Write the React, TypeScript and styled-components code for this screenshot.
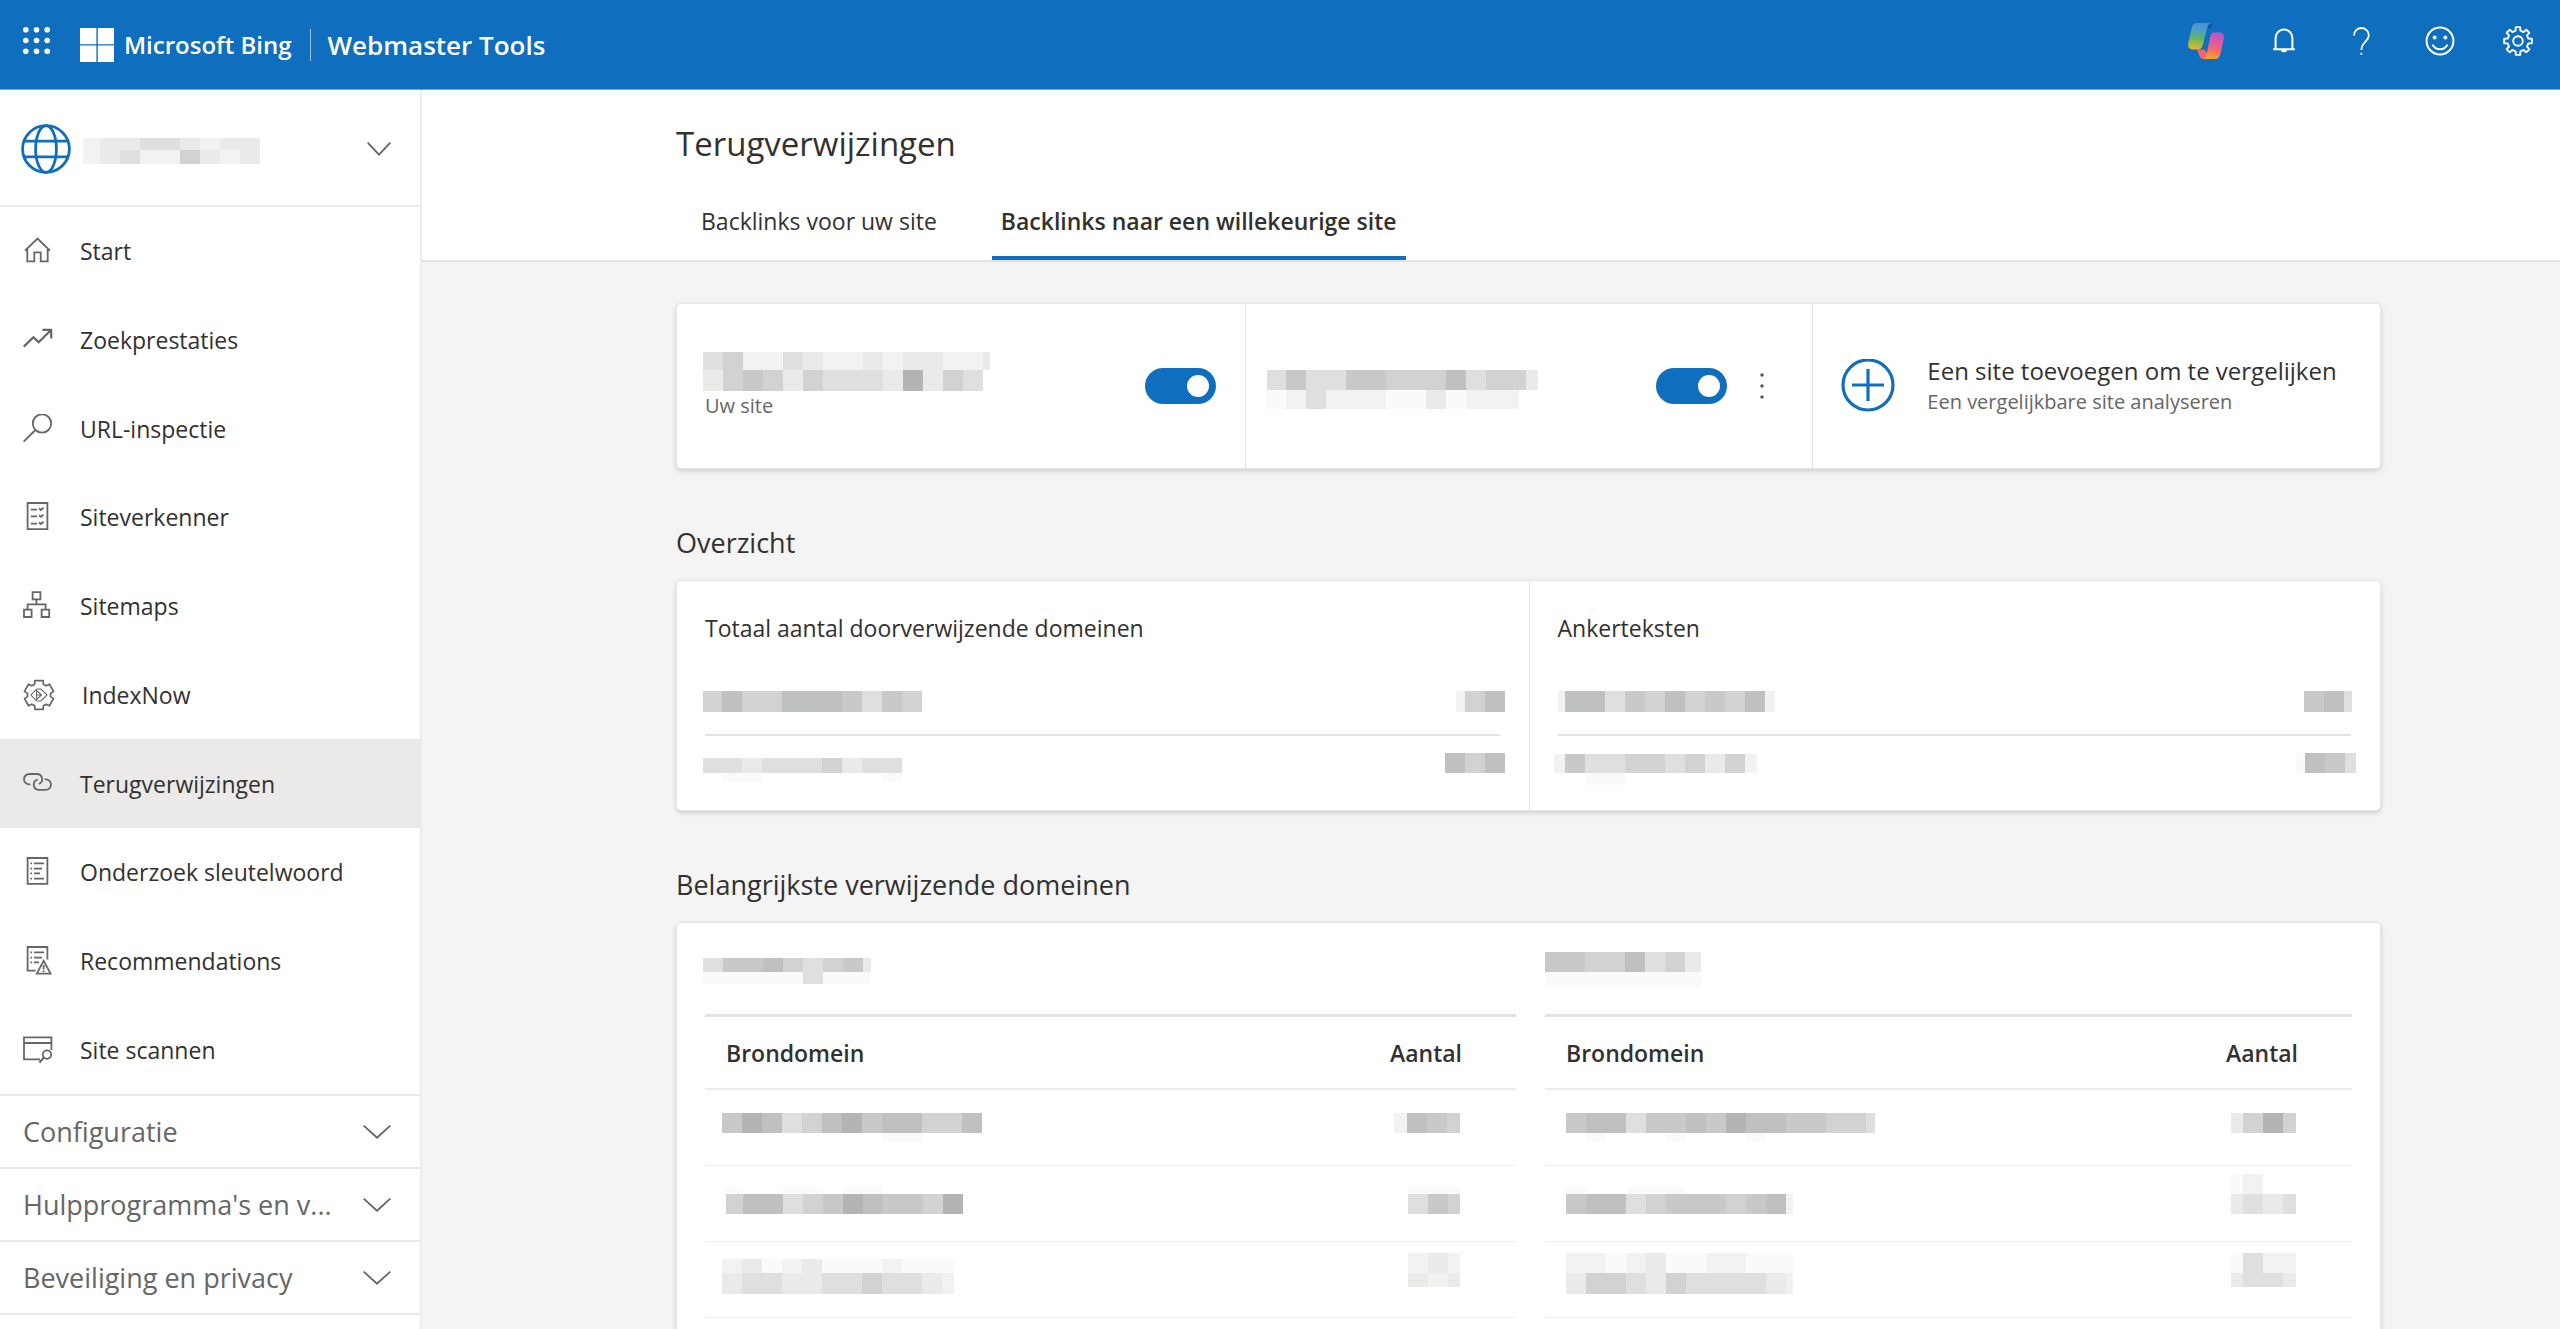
import React from "react";
import styled, { createGlobalStyle, css } from "styled-components";

const blue = "#106ebe";
const ink = "#323130";
const muted = "#666666";
const line = "#e3e3e3";

const GlobalStyle = createGlobalStyle`
  *, *::before, *::after { box-sizing: border-box; }
  body {
    margin: 0;
    overflow: hidden;
    background: #f4f4f4;
    color: ${ink};
    font-family: "Open Sans", "Noto Sans", sans-serif;
    font-size: 23px;
    line-height: 32px;
  }
  button { font: inherit; color: inherit; background: none; border: 0; padding: 0; cursor: pointer; }
  a { color: inherit; text-decoration: none; }
  h1, h2, h3, p, ul { margin: 0; padding: 0; font-weight: 400; }
  ul { list-style: none; }
  svg { display: block; flex: none; }
`;

/* ---------- layout ---------- */

const Page = styled.div`
  display: flex;
  flex-direction: column;
  height: 100vh;
  overflow: hidden;
`;

const TopBar = styled.header`
  display: flex;
  align-items: center;
  flex: none;
  height: 90px;
  padding: 0 3px 0 23px;
  background: ${blue};
  border-bottom: 1px solid #6ba5d8;
  color: #fff;
`;

const Waffle = styled.button`
  padding-bottom: 8px;
`;

const Brand = styled.a`
  display: flex;
  align-items: center;
  margin-left: 30px;
  gap: 10px;
  font-size: 24px;
  font-weight: 600;
`;

const Product = styled.a`
  margin-left: 18px;
  padding-left: 17px;
  font-size: 26px;
  font-weight: 600;
  border-left: 1px solid #9cc3e5;
`;

const Tools = styled.div`
  display: flex;
  margin-left: auto;
  padding-bottom: 8px;
`;

const ToolButton = styled.button`
  display: grid;
  place-items: center;
  width: 78px;
  height: 40px;
`;

const Body = styled.div`
  display: flex;
  flex: 1;
  min-height: 0;
`;

const Sidebar = styled.nav`
  flex: none;
  width: 422px;
  background: #fff;
  border-right: 2px solid #ececec;
`;

const SitePicker = styled.button`
  display: flex;
  align-items: center;
  width: 100%;
  height: 117px;
  padding: 2px 29px 0 21px;
  border-bottom: 2px solid #ececec;
`;

const SiteName = styled.span`
  margin: 4px auto 0 12px;
`;

const NavList = styled.ul`
  display: grid;
  grid-auto-rows: 1fr;
  height: 887px;
`;

const NavLink = styled.a<{ $active?: boolean }>`
  display: flex;
  align-items: center;
  gap: 27px;
  height: 100%;
  padding-left: 23px;
  color: ${ink};
  background: ${(p) => (p.$active ? "#ebeae9" : "transparent")};
  svg { color: ${muted}; }
`;

const Section = styled.button`
  display: flex;
  align-items: center;
  justify-content: space-between;
  width: 100%;
  height: 73px;
  padding: 0 29px 0 23px;
  border-top: 2px solid #e8e8e8;
  color: ${muted};
  font-size: 27px;
`;

const SidebarEnd = styled.div`
  border-top: 2px solid #e8e8e8;
`;

const Main = styled.main`
  flex: 1;
  min-width: 0;
`;

const PageHead = styled.div`
  padding: 32px 179px 0 254px;
  background: #fff;
  border-bottom: 2px solid #e1e1e1;
`;

const Title = styled.h1`
  margin-bottom: 20px;
  font-size: 33px;
  line-height: 44px;
`;

const Tabs = styled.div`
  display: flex;
  gap: 46px;
  padding-left: 16px;
`;

const Tab = styled.button<{ $active?: boolean }>`
  padding: 18px 9px;
  line-height: 34px;
  border-bottom: 4px solid transparent;
  ${(p) => p.$active && css`
    font-weight: 600;
    border-color: ${blue};
  `}
`;

const Content = styled.div`
  padding: 41px 179px 0 254px;
`;

const Card = styled.section<{ $columns?: number }>`
  display: grid;
  grid-template-columns: repeat(${(p) => p.$columns ?? 2}, 1fr);
  background: #fff;
  border: 1px solid #e6e6e6;
  border-radius: 5px;
  box-shadow: 0 2px 5px rgba(0, 0, 0, 0.16);
`;

const Heading = styled.h2`
  margin: 56px 0 19px;
  font-size: 27px;
  line-height: 36px;
`;

/* ---------- compare card ---------- */

const CompareCell = styled.div`
  display: flex;
  align-items: center;
  height: 164px;
  padding: 0 29px 0 28px;
  border-left: 1px solid ${line};
  &:first-child { border-left: 0; }
`;

const SiteBlock = styled.div`
  margin-right: auto;
`;

const Small = styled.p`
  color: ${muted};
  font-size: 20px;
  line-height: 30px;
`;

const Toggle = styled.input`
  appearance: none;
  display: flex;
  align-items: center;
  justify-content: flex-end;
  width: 71px;
  height: 36px;
  margin: 0;
  padding: 0 7px;
  border-radius: 18px;
  background: #8a8886;
  cursor: pointer;
  &::before {
    content: "";
    width: 22px;
    height: 22px;
    border-radius: 50%;
    background: #fff;
  }
  &:checked { background: ${blue}; }
`;

const MoreButton = styled.button`
  display: grid;
  place-items: center;
  width: 24px;
  height: 36px;
  margin: 0 9px 0 23px;
`;

const AddSite = styled.button`
  display: flex;
  align-items: center;
  gap: 32px;
  font-size: 24px;
  text-align: left;
`;

/* ---------- overview card ---------- */

const Panel = styled.div`
  padding: 31px 29px 20px 28px;
  border-left: 1px solid ${line};
  &:first-child { border-left: 0; }
`;

const PanelTitle = styled.h3`
  margin-bottom: 24px;
  font-size: 23px;
`;

const StatRow = styled.li`
  display: flex;
  align-items: center;
  justify-content: space-between;
  height: 68px;
  border-bottom: 2px solid ${line};
  &:last-child {
    height: 54px;
    border-bottom: 0;
  }
`;

/* ---------- domain tables ---------- */

const TableCard = styled(Card)`
  grid-template-columns: 201fr 200fr;
  column-gap: 29px;
  padding: 29px 28px 48px;
`;

const TableTitle = styled.div`
  height: 62px;
`;

const Table = styled.table`
  width: 100%;
  border-spacing: 0;
  border-top: 3px solid #e1e1e1;
`;

const Th = styled.th`
  height: 73px;
  padding: 0 54px 0 21px;
  border-bottom: 2px solid #ebebeb;
  font-weight: 600;
  text-align: left;
  &:last-child { text-align: right; }
`;

const Td = styled.td`
  height: 76px;
  padding: 0 56px 0 21px;
  border-bottom: 1px solid #eeeeee;
  vertical-align: middle;
`;

/* ---------- redacted values ---------- */

const shades = ["transparent", "#fafafa", "#f2f2f0", "#eaeae9", "#dfdfdf", "#d2d2d2", "#c8c9c8", "#bfc1c0", "#b3b4b3"];

type Strip = { h: number; cells?: string; first?: number; last?: number };
type Redacted = { strips: Strip[]; left?: number; right?: number; end?: boolean };

const Blocks = styled.span<{ $end?: boolean }>`
  display: flex;
  flex-direction: column;
  align-items: ${(p) => (p.$end ? "flex-end" : "flex-start")};
`;

const StripRow = styled.span`
  display: flex;
`;

const Block = styled.span<{ $shade: number }>`
  background: ${(p) => shades[p.$shade]};
`;

function Redaction({ strips, left = 0, right = 0, end }: Redacted) {
  return (
    <Blocks $end={end} style={{ marginLeft: -left, marginRight: -right }}>
      {strips.map((s, i) => {
        const cells = (s.cells ?? "").split("");
        return (
          <StripRow key={i} style={{ height: s.h }}>
            {cells.map((c, j) => {
              const width = j === 0 ? s.first ?? 20 : j === cells.length - 1 ? s.last ?? 20 : 20;
              return <Block key={j} $shade={Number(c)} style={{ width }} />;
            })}
          </StripRow>
        );
      })}
    </Blocks>
  );
}

const ownSite: Redacted = {
  left: 2,
  strips: [
    { h: 18, cells: "452243223233223", last: 7 },
    { h: 21, cells: "35653544438354", last: 20 },
  ],
};

const otherSite: Redacted = {
  left: 7,
  strips: [
    { h: 7 },
    { h: 20, cells: "46446655574553", first: 19, last: 12 },
    { h: 19, cells: "1242221131222", first: 19, last: 13 },
  ],
};

const overview: { title: string; rows: [Redacted, Redacted][] }[] = [
  {
    title: "Totaal aantal doorverwijzende domeinen",
    rows: [
      [
        { left: 2, strips: [{ h: 21, cells: "57557776465", first: 19 }] },
        { right: 5, strips: [{ h: 21, cells: "257", first: 9 }] },
      ],
      [
        { left: 2, strips: [{ h: 14 }, { h: 15, cells: "4434445344", first: 19 }, { h: 9, cells: "0110000001", first: 19 }] },
        { right: 5, strips: [{ h: 20, cells: "757" }] },
      ],
    ],
  },
  {
    title: "Ankerteksten",
    rows: [
      [
        { strips: [{ h: 21, cells: "277465756572", first: 7, last: 10 }] },
        { right: 1, strips: [{ h: 21, cells: "674", last: 8 }] },
      ],
      [
        { left: 4, strips: [{ h: 12 }, { h: 19, cells: "26445545352", first: 11, last: 12 }, { h: 12, cells: "0011", first: 11 }] },
        { right: 5, strips: [{ h: 20, cells: "1764", first: 9, last: 11 }] },
      ],
    ],
  },
];

const domainTables: { name: Redacted; rows: [Redacted, Redacted][] }[] = [
  {
    name: {
      left: 2,
      strips: [{ h: 6 }, { h: 14, cells: "466754563", last: 8 }, { h: 12, cells: "111114111", last: 8 }],
    },
    rows: [
      [
        { left: 4, strips: [{ h: 20, cells: "6874578677557" }, { h: 9, cells: "0000000011" }] },
        { end: true, strips: [{ h: 20, cells: "2765", first: 13, last: 13 }, { h: 9 }] },
      ],
      [
        { strips: [{ h: 7, cells: "100110110", first: 17 }, { h: 20, cells: "577456876658", first: 17 }, { h: 7 }] },
        { end: true, strips: [{ h: 7, cells: "111", last: 12 }, { h: 20, cells: "465", last: 12 }, { h: 7 }] },
      ],
      [
        { left: 4, strips: [{ h: 14, cells: "231231112111", last: 12 }, { h: 21, cells: "344334454432", last: 12 }, { h: 7 }] },
        { end: true, strips: [{ h: 20, cells: "232", last: 12 }, { h: 14, cells: "323", last: 12 }, { h: 19 }] },
      ],
    ],
  },
  {
    name: { strips: [{ h: 20, cells: "66557453", last: 16 }, { h: 16, cells: "11111111", last: 16 }] },
    rows: [
      [
        { strips: [{ h: 20, cells: "6774667687766554", last: 9 }, { h: 9, cells: "0100010001" }] },
        { end: true, strips: [{ h: 20, cells: "3585", first: 12, last: 13 }, { h: 9 }] },
      ],
      [
        { strips: [{ h: 7, cells: "100111" }, { h: 20, cells: "677456665672", last: 7 }, { h: 7 }] },
        { end: true, strips: [{ h: 20, cells: "1200", first: 12, last: 13 }, { h: 20, cells: "3434", first: 12, last: 13 }, { h: 20 }] },
      ],
      [
        { strips: [{ h: 20, cells: "221231122111", last: 7 }, { h: 21, cells: "355435444432", last: 7 }, { h: 12 }] },
        { end: true, strips: [{ h: 20, cells: "1422", first: 12, last: 13 }, { h: 14, cells: "3443", first: 12, last: 13 }, { h: 19 }] },
      ],
    ],
  },
];

/* ---------- icons ---------- */

function gearPath(c: number, teeth: number, outer: number, inner: number, top: number, foot: number) {
  const points: string[] = [];
  for (let i = 0; i < teeth; i++) {
    const mid = (i * 360) / teeth - 90;
    [[-foot, inner], [-top, outer], [top, outer], [foot, inner]].forEach(([d, r]) => {
      const a = ((mid + d) * Math.PI) / 180;
      points.push(`${(c + r * Math.cos(a)).toFixed(2)} ${(c + r * Math.sin(a)).toFixed(2)}`);
    });
  }
  return `M${points.join("L")}Z`;
}

const Icon = ({ size = 30, width = 1.8, children }: { size?: number; width?: number; children: React.ReactNode }) => (
  <svg width={size} height={size} viewBox={`0 0 ${size} ${size}`} fill="none" stroke="currentColor" strokeWidth={width} aria-hidden="true">
    {children}
  </svg>
);

const Chevron = ({ width = 28, height = 14 }: { width?: number; height?: number }) => (
  <svg width={width} height={height} viewBox={`0 0 ${width} ${height}`} fill="none" stroke="#666" strokeWidth="1.8" aria-hidden="true">
    <path d={`M.7 .7L${width / 2} ${height - 1.3}L${width - 0.7} .7`} />
  </svg>
);

const icons = {
  home: <Icon><path d="M2 14.6L14.5 2.5L27 14.6M4.3 12.5V25.4H11.3V16.3H17.7V25.4H24.7V12.5" /></Icon>,
  trend: <Icon width={2.2}><path d="M.8 21.6L10.4 12.2L15.7 17.2L28 5M19.4 4.8H28.2V13.6" /></Icon>,
  search: <Icon><circle cx="19" cy="9.5" r="9.2" /><path d="M12.4 16L.6 27.6" /></Icon>,
  checklist: (
    <Icon>
      <path d="M4.6 1H24.4V27.2H4.6Z" />
      <path d="M7.8 7.6H14M7.8 14.4H14M7.8 21.6H14M16 6.4L17.8 8L20.6 5.8M16 13.2L17.8 14.8L20.6 12.6M16 20.4L17.8 22L20.6 19.8" />
    </Icon>
  ),
  sitemap: (
    <Icon>
      <path d="M9.6 1.2H17.4V8.4H9.6ZM1 18.6H8.6V26H1ZM18.6 18.6H26.2V26H18.6ZM13.4 8.4V13.4M4.6 18.6V13.4H22.6V18.6" />
    </Icon>
  ),
  indexnow: (
    <Icon size={32} width={1.7}>
      <path d={gearPath(16, 6, 15, 11.6, 16, 22)} strokeLinejoin="round" />
      <path d="M13.5 10L8 16L13.5 22M13.5 10H18L24 16L18 22H13.5M13.5 11.5L18.5 16L13.5 20.5ZM13.5 16H18.5" strokeWidth="1.1" />
    </Icon>
  ),
  link: (
    <Icon>
      <path d="M7.4 15.4H6.4A5.4 5.2 0 0 1 6.4 5H13.4A5.4 5.2 0 0 1 15.8 15M14.6 10.6A5.2 5.2 0 0 0 15.6 20.8H22.8A5.2 5.2 0 0 0 22.8 10.4H21.6" />
    </Icon>
  ),
  list: (
    <Icon>
      <path d="M4.6 1H24.4V26.8H4.6Z" />
      <path d="M7.4 6.4H9M11 6.4H21M7.4 11.6H9M11 11.6H19M7.4 16.4H9M11 16.4H17M7.4 21.6H9M11 21.6H21" />
    </Icon>
  ),
  recommend: (
    <Icon>
      <path d="M12.6 24.6H4.6V1H24.4V13.4" />
      <path d="M7.4 6.4H9M11 6.4H21M7.4 11.6H9M11 11.6H19M7.4 16.4H9M11 16.4H16" />
      <path d="M20.6 14.8L27.6 27.6H13.8ZM20.6 19V23.4M20.6 24.6V26" />
    </Icon>
  ),
  scan: (
    <Icon>
      <path d="M17 24.4H1V2.4H28.4V15M1 8H28.4" />
      <circle cx="24" cy="19.6" r="4.2" />
      <path d="M21 22.6L16.4 27.6" strokeWidth="2.2" />
    </Icon>
  ),
};

const Globe = () => (
  <svg width="50" height="50" viewBox="0 0 50 50" fill="none" stroke={blue} strokeWidth="2.8" aria-hidden="true">
    <circle cx="25" cy="25" r="23.4" />
    <ellipse cx="25" cy="25" rx="10.4" ry="23.4" />
    <path d="M3 17.2H47M3 32.8H47" />
  </svg>
);

const Copilot = () => (
  <svg width="36" height="36" viewBox="0 0 36 36" aria-hidden="true">
    <defs>
      <linearGradient id="cool" x1="12" y1="0" x2="8" y2="27" gradientUnits="userSpaceOnUse">
        <stop offset="0" stopColor="#4a90d6" />
        <stop offset="0.3" stopColor="#4f9fc4" />
        <stop offset="0.55" stopColor="#5fb36a" />
        <stop offset="0.78" stopColor="#a9b840" />
        <stop offset="1" stopColor="#f2b224" />
      </linearGradient>
      <linearGradient id="warm" x1="29" y1="9" x2="23" y2="36" gradientUnits="userSpaceOnUse">
        <stop offset="0" stopColor="#b557cf" />
        <stop offset="0.35" stopColor="#d95aa8" />
        <stop offset="0.65" stopColor="#f8686a" />
        <stop offset="1" stopColor="#f5a62b" />
      </linearGradient>
    </defs>
    <path d="M19 5L21.5 1.5H24.5L22.5 5Z" fill="#174f96" />
    <path d="M9 26.5H16L20 31L19 36H15.5C12.5 36 11.6 33.6 10.8 31Z" fill="#f4656f" />
    <path d="M8.4 0H22C20.6 .9 19.8 2.6 19.2 5L14.6 22.4C13.8 25 12.6 26.4 10 26.4H4.4C1.2 26.4-.4 23.8 .2 20.8C.9 17 2 11.6 3.6 5.4C4.4 2.2 5.6 0 8.4 0Z" fill="url(#cool)" />
    <path d="M26 9.6H31.6C34.8 9.6 36.4 12.2 35.8 15.2C35.1 19 34 24.4 32.4 30.6C31.6 33.8 30.4 36 27.6 36H15.4C17.2 35.4 18 33.6 18.6 31.4L22.2 13.6C22.8 11 23.8 9.6 26 9.6Z" fill="url(#warm)" />
  </svg>
);

const navItems: [keyof typeof icons, string][] = [
  ["home", "Start"],
  ["trend", "Zoekprestaties"],
  ["search", "URL-inspectie"],
  ["checklist", "Siteverkenner"],
  ["sitemap", "Sitemaps"],
  ["indexnow", "IndexNow"],
  ["link", "Terugverwijzingen"],
  ["list", "Onderzoek sleutelwoord"],
  ["recommend", "Recommendations"],
  ["scan", "Site scannen"],
];

const sections = ["Configuratie", "Hulpprogramma's en v...", "Beveiliging en privacy"];

export default function App() {
  return (
    <Page>
      <GlobalStyle />
      <TopBar>
        <Waffle aria-label="Apps">
          <svg width="27" height="27" viewBox="0 0 27 27" fill="#fff" aria-hidden="true">
            {[2.8, 13.5, 24.2].map((y) => [2.8, 13.5, 24.2].map((x) => <circle key={`${x}-${y}`} cx={x} cy={y} r="2.8" />))}
          </svg>
        </Waffle>
        <Brand href="#">
          <svg width="34" height="34" viewBox="0 0 34 34" fill="#fff" aria-hidden="true">
            <path d="M0 0H16.4V16.2H0ZM17.8 0H34V16.2H17.8ZM0 17.6H16.4V34H0ZM17.8 17.6H34V34H17.8Z" />
          </svg>
          Microsoft Bing
        </Brand>
        <Product href="#">Webmaster Tools</Product>
        <Tools>
          <ToolButton aria-label="Copilot"><Copilot /></ToolButton>
          <ToolButton aria-label="Meldingen">
            <Icon size={28} width={2}>
              <path d="M3.2 22.2H24.8M5.6 22V11A8.4 8.4 0 0 1 22.4 11V22M11.4 22.4A2.7 2.7 0 0 0 16.6 22.4" />
            </Icon>
          </ToolButton>
          <ToolButton aria-label="Help">
            <Icon size={28} width={1.8}>
              <path d="M6 8.4A7.4 7.4 0 0 1 20.8 8.4C20.8 14.6 13.4 14.8 13.4 23" />
              <path d="M13.4 25.8V27.8" />
            </Icon>
          </ToolButton>
          <ToolButton aria-label="Feedback">
            <Icon size={30} width={2}>
              <circle cx="15" cy="15" r="13.4" />
              <circle cx="9.6" cy="11.4" r="1" fill="#fff" />
              <circle cx="20.4" cy="11.4" r="1" fill="#fff" />
              <path d="M7.6 18.6C10.6 24.8 19.4 24.8 22.4 18.6" />
            </Icon>
          </ToolButton>
          <ToolButton aria-label="Instellingen">
            <Icon size={30} width={1.9}>
              <path d={gearPath(15, 8, 14, 10.6, 9, 13)} strokeLinejoin="round" />
              <circle cx="15" cy="15" r="4.8" />
            </Icon>
          </ToolButton>
        </Tools>
      </TopBar>
      <Body>
        <Sidebar>
          <SitePicker aria-label="Site kiezen">
            <Globe />
            <SiteName>
              <Redaction strips={[{ h: 12, cells: "233443233", first: 17 }, { h: 14, cells: "234225323", first: 17 }]} />
            </SiteName>
            <Chevron width={24} height={14} />
          </SitePicker>
          <NavList>
            {navItems.map(([icon, label]) => (
              <li key={label}>
                <NavLink href="#" $active={icon === "link"} aria-current={icon === "link" ? "page" : undefined}>
                  {icons[icon]}
                  {label}
                </NavLink>
              </li>
            ))}
          </NavList>
          {sections.map((label) => (
            <Section key={label}>
              {label}
              <Chevron />
            </Section>
          ))}
          <SidebarEnd />
        </Sidebar>
        <Main>
          <PageHead>
            <Title>Terugverwijzingen</Title>
            <Tabs role="tablist">
              <Tab role="tab" aria-selected="false">Backlinks voor uw site</Tab>
              <Tab role="tab" aria-selected="true" $active>Backlinks naar een willekeurige site</Tab>
            </Tabs>
          </PageHead>
          <Content>
            <Card $columns={3}>
              <CompareCell>
                <SiteBlock>
                  <Redaction {...ownSite} />
                  <Small>Uw site</Small>
                </SiteBlock>
                <Toggle type="checkbox" role="switch" defaultChecked aria-label="Uw site" />
              </CompareCell>
              <CompareCell>
                <SiteBlock><Redaction {...otherSite} /></SiteBlock>
                <Toggle type="checkbox" role="switch" defaultChecked aria-label="Vergeleken site" />
                <MoreButton aria-label="Meer opties">
                  <svg width="4" height="26" viewBox="0 0 4 26" fill="#555" aria-hidden="true">
                    <circle cx="2" cy="2" r="1.7" /><circle cx="2" cy="13" r="1.7" /><circle cx="2" cy="24" r="1.7" />
                  </svg>
                </MoreButton>
              </CompareCell>
              <CompareCell>
                <AddSite>
                  <svg width="54" height="54" viewBox="0 0 54 54" fill="none" stroke={blue} strokeWidth="3.2" aria-hidden="true">
                    <circle cx="27" cy="26" r="25" /><path d="M11 26H43M27 10V42" />
                  </svg>
                  <div>
                    <p>Een site toevoegen om te vergelijken</p>
                    <Small>Een vergelijkbare site analyseren</Small>
                  </div>
                </AddSite>
              </CompareCell>
            </Card>

            <Heading>Overzicht</Heading>
            <Card>
              {overview.map((panel) => (
                <Panel key={panel.title}>
                  <PanelTitle>{panel.title}</PanelTitle>
                  <ul>
                    {panel.rows.map(([name, count], i) => (
                      <StatRow key={i}>
                        <Redaction {...name} />
                        <Redaction {...count} />
                      </StatRow>
                    ))}
                  </ul>
                </Panel>
              ))}
            </Card>

            <Heading>Belangrijkste verwijzende domeinen</Heading>
            <TableCard>
              {domainTables.map((table, t) => (
                <div key={t}>
                  <TableTitle><Redaction {...table.name} /></TableTitle>
                  <Table>
                    <thead>
                      <tr><Th scope="col">Brondomein</Th><Th scope="col">Aantal</Th></tr>
                    </thead>
                    <tbody>
                      {table.rows.map(([name, count], i) => (
                        <tr key={i}>
                          <Td><Redaction {...name} /></Td>
                          <Td><Redaction {...count} /></Td>
                        </tr>
                      ))}
                    </tbody>
                  </Table>
                </div>
              ))}
            </TableCard>
          </Content>
        </Main>
      </Body>
    </Page>
  );
}
